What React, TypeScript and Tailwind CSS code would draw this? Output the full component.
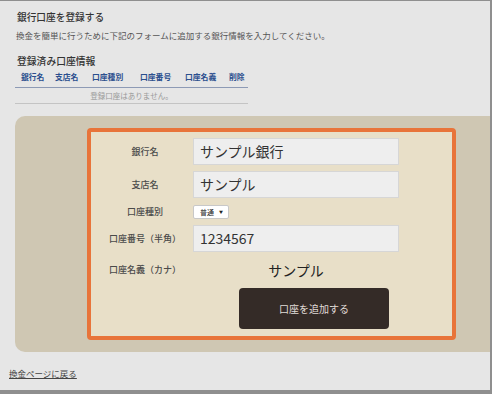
export default function App() {
  const cols = [
    { l: "銀行名", w: "w-[34px]" },
    { l: "支店名", w: "w-[37px]" },
    { l: "口座種別", w: "w-[48px]" },
    { l: "口座番号", w: "w-[45px]" },
    { l: "口座名義", w: "w-[44px]" },
    { l: "削除", w: "w-[18px]" },
  ];

  return (
    <div className="h-[394px] w-[492px] bg-[#8f8f8f] pt-px pr-[2px] pb-[4px] font-['Noto_Sans_CJK_JP',sans-serif]">
      <div className="flex h-full flex-col overflow-hidden bg-[#e6e6e6]">
        {/* page heading */}
        <h1 className="mt-[10px] pl-[17px] text-[9.7px] leading-[12px] font-medium text-[#333]">銀行口座を登録する</h1>
        <p className="mt-[7px] pl-[16px] text-[8.5px] leading-[10px] text-[#555]">
          換金を簡単に行うために下記のフォームに追加する銀行情報を入力してください。
        </p>
        <h2 className="mt-[15px] pl-[17px] text-[9.8px] leading-[12px] font-medium text-[#333]">登録済み口座情報</h2>

        {/* registered accounts table */}
        <div className="ml-[15px] w-[233px]">
          <div className="mt-[5px] flex border-b border-[#8d9ab5] pb-[5px] pl-[6px] text-[7.8px] font-bold leading-[10px] text-[#2b4f8e]">
            {cols.map((c) => (
              <span key={c.l} className={c.w}>
                {c.l}
              </span>
            ))}
          </div>
          <div className="flex h-[16px] items-center justify-center border-b border-[#c4c4c4] text-[7.5px] text-[#999]">
            登録口座はありません。
          </div>
        </div>

        {/* form panel */}
        <div className="mt-[12px] ml-[15px] rounded-l-[10px] bg-[#cfc7b3] py-[12px] pl-[72px]">
          <div className="w-[369px] rounded-[4px] border-4 border-[#e8743a] bg-[#e8dfc8] pt-[6px] pb-[7px]">
            <div className="flex h-[27px] items-center">
              <span className="w-[102px] pl-[6px] text-center text-[9px] font-medium text-[#4a4a4a]">銀行名</span>
              <div className="flex h-full w-[206px] items-center border border-[#d6d6d6] bg-[#eeeeee] px-[6px] text-[14px] text-[#333]">
                サンプル銀行
              </div>
            </div>
            <div className="mt-[6px] flex h-[27px] items-center">
              <span className="w-[102px] pl-[6px] text-center text-[9px] font-medium text-[#4a4a4a]">支店名</span>
              <div className="flex h-full w-[206px] items-center border border-[#d6d6d6] bg-[#eeeeee] px-[6px] text-[14px] text-[#333]">
                サンプル
              </div>
            </div>
            <div className="mt-[7px] flex h-[14px] items-center">
              <span className="w-[102px] pl-[6px] text-center text-[9px] font-medium text-[#4a4a4a]">口座種別</span>
              <div className="flex h-full w-[36px] items-center justify-between rounded-[2px] border border-[#c8c8c8] bg-white pr-[5px] pl-[6px] text-[7px] text-[#222]">
                <span>普通</span>
                <span className="text-[4px]">▼</span>
              </div>
            </div>
            <div className="mt-[6px] flex h-[27px] items-center">
              <span className="w-[102px] pl-[6px] text-center text-[9px] font-medium text-[#4a4a4a]">口座番号（半角）</span>
              <div className="flex h-full w-[206px] items-center border border-[#d6d6d6] bg-[#eeeeee] px-[6px] text-[14px] text-[#333]">
                1234567
              </div>
            </div>
            <div className="mt-[8px] flex h-[20px] items-center">
              <span className="w-[102px] pl-[6px] text-center text-[9px] font-medium text-[#4a4a4a]">口座名義（カナ）</span>
              <span className="w-[206px] text-center text-[14px] text-[#222]">サンプル</span>
            </div>
            <div className="mt-[8px] pl-[148px]">
              <button className="flex h-[41px] w-[150px] items-center justify-center rounded-[4px] bg-[#342b27] text-[10px] text-[#e0dcd8]">
                口座を追加する
              </button>
            </div>
          </div>
        </div>

        <a href="#" className="mt-[16px] pl-[9px] text-[8.5px] leading-[10px] text-[#444] underline">
          換金ページに戻る
        </a>
      </div>
    </div>
  );
}
